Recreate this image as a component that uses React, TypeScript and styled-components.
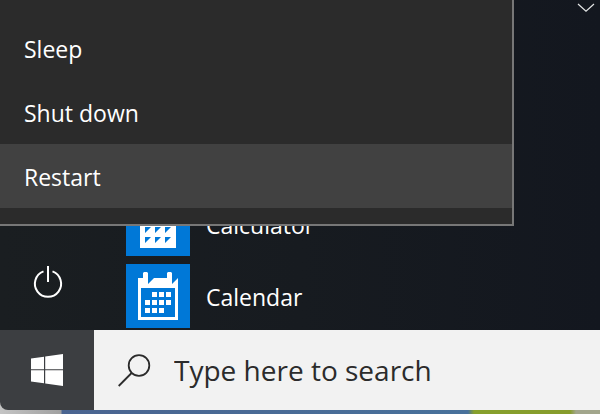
import React from "react";
import styled, { createGlobalStyle } from "styled-components";

const GlobalStyle = createGlobalStyle`
  *, *::before, *::after { box-sizing: border-box; }
  body { margin: 0; overflow: hidden; font-family: "Open Sans", "Noto Sans", sans-serif; }
  button, input { font: inherit; color: inherit; border: 0; margin: 0; padding: 0; background: none; }
  svg { display: block; flex: none; }
`;

const Desktop = styled.div`
  display: flex;
  flex-direction: column;
  min-height: 100vh;
  padding-bottom: 4px;
  background: linear-gradient(
    to right,
    #c4c4c4 0,
    #a0a0a0 61px,
    #4a6490 62px,
    #48719b 78%,
    #86a02c 79%,
    #869c2c 95%,
    #a2a68c 96%
  );
`;

const StartMenu = styled.main`
  position: relative;
  flex: 1;
  display: flex;
  overflow: hidden;
  background: linear-gradient(to right, #1a1e21, #171b20 50%, #13171f);
`;

const Rail = styled.nav`
  display: flex;
  flex-direction: column;
  justify-content: flex-end;
  width: 96px;
  padding-bottom: 16px;
`;

const RailButton = styled.button`
  display: flex;
  align-items: center;
  justify-content: center;
  height: 64px;
  color: #fff;
`;

const AppList = styled.div`
  flex: 1;
  display: flex;
  flex-direction: column;
  justify-content: flex-end;
  gap: 8px;
  padding: 0 30px 2px;
`;

const AppItem = styled.button`
  display: flex;
  align-items: center;
  gap: 16px;
  height: 64px;
  color: #fff;
  font-size: 23px;
  line-height: 32px;
  text-align: left;
`;

const AppName = styled.span`
  padding-top: 2px;
`;

const CollapseButton = styled.button`
  display: flex;
  align-self: flex-start;
  padding: 3px 5px 6px;
  position: absolute;
  top: 0;
  right: 0;
`;

const PowerMenu = styled.div`
  position: absolute;
  top: 0;
  left: 0;
  display: flex;
  flex-direction: column;
  width: 514px;
  max-width: 100%;
  padding: 16px 0;
  background: #2b2b2b;
  border: solid #777;
  border-width: 0 2px 2px 0;
`;

const PowerItem = styled.button<{ $active?: boolean }>`
  height: 64px;
  padding: 2px 24px 0;
  color: #fff;
  background: ${(p) => (p.$active ? "#414141" : "transparent")};
  font-size: 23px;
  line-height: 32px;
  text-align: left;
`;

const Taskbar = styled.footer`
  display: flex;
  height: 80px;
  overflow: hidden;
  background: #3c3e41;
  border-bottom-left-radius: 8px;
`;

const StartButton = styled.button`
  display: flex;
  align-items: center;
  justify-content: center;
  width: 94px;
`;

const SearchBox = styled.label`
  flex: 1;
  display: flex;
  align-items: center;
  gap: 22px;
  padding: 0 24px;
  background: #f2f2f2;
  color: #2b2b2b;
`;

const SearchInput = styled.input`
  flex: 1;
  min-width: 0;
  height: 40px;
  font-size: 28px;
  line-height: 40px;
  outline: none;
  &::placeholder {
    color: #2b2b2b;
    opacity: 1;
  }
`;

const PowerIcon = () => (
  <svg width="32" height="34" viewBox="0 0 32 34" fill="none" stroke="#fff" strokeWidth="2" aria-hidden="true">
    <path d="M11.5 6.4A13.1 13.1 0 1 0 20.5 6.4M16 1V17" />
  </svg>
);

const ChevronIcon = () => (
  <svg width="18" height="10" viewBox="0 0 18 10" fill="none" stroke="#e4e6e6" strokeWidth="1.2" aria-hidden="true">
    <path d="M1 1L9 8.3L17 1" />
  </svg>
);

const CalculatorIcon = () => (
  <svg width="64" height="64" viewBox="0 0 64 64" aria-hidden="true">
    <path fill="#0078d7" d="M0 0H64V64H0Z" />
    <path fill="#fff" d="M14 8H50V56H14Z" />
    <path
      fill="#0078d7"
      d="M19 13H45V24H19ZM19 35H25L19 41ZM29 35H35L29 41ZM39 35H45L39 41ZM19 45H25L19 51ZM29 45H35L29 51ZM39 45H45L39 51Z"
    />
  </svg>
);

const CalendarIcon = () => (
  <svg width="64" height="64" viewBox="0 0 64 64" aria-hidden="true">
    <path fill="#0078d7" d="M0 0H64V64H0Z" />
    <path
      fill="#fff"
      fillRule="evenodd"
      d="M12 14H17V9L18 8H21L22 9V20L28 14H41V9L42 8H45L46 9V20L52 14V56H12ZM15 24V53H49V24Z"
    />
    <path
      fill="#fff"
      d="M26 28h5v5h-5zM33 28h5v5h-5zM40 28h5v5h-5zM19 36h5v5h-5zM26 36h5v5h-5zM33 36h5v5h-5zM40 36h5v5h-5zM19 44h5v5h-5zM26 44h5v5h-5zM33 44h5v5h-5z"
    />
  </svg>
);

const WindowsIcon = () => (
  <svg width="32" height="32" viewBox="0 0 32 32" fill="#fff" aria-hidden="true">
    <path d="M0 4.5L13 2.7V15.2H0ZM14.2 2.5L32 0V15.2H14.2ZM0 16.3H13V29.3L0 27.5ZM14.2 16.3H32V32L14.2 29.5Z" />
  </svg>
);

const SearchIcon = () => (
  <svg width="34" height="34" viewBox="0 0 34 34" fill="none" stroke="#2b2b2b" strokeWidth="1.8" aria-hidden="true">
    <circle cx="21" cy="12.5" r="10.3" />
    <path d="M13.6 20L.7 33" />
  </svg>
);

const apps = [
  { name: "Calculator", Icon: CalculatorIcon },
  { name: "Calendar", Icon: CalendarIcon },
];

const powerActions = ["Sleep", "Shut down", "Restart"];

export default function App() {
  return (
    <Desktop>
      <GlobalStyle />
      <StartMenu>
        <Rail>
          <RailButton type="button" aria-label="Power">
            <PowerIcon />
          </RailButton>
        </Rail>
        <AppList>
          {apps.map(({ name, Icon }) => (
            <AppItem key={name} type="button">
              <Icon />
              <AppName>{name}</AppName>
            </AppItem>
          ))}
        </AppList>
        <CollapseButton type="button" aria-label="Collapse">
          <ChevronIcon />
        </CollapseButton>
        <PowerMenu role="menu" aria-label="Power">
          {powerActions.map((action) => (
            <PowerItem key={action} type="button" role="menuitem" $active={action === "Restart"}>
              {action}
            </PowerItem>
          ))}
        </PowerMenu>
      </StartMenu>
      <Taskbar>
        <StartButton type="button" aria-label="Start">
          <WindowsIcon />
        </StartButton>
        <SearchBox>
          <SearchIcon />
          <SearchInput type="text" placeholder="Type here to search" aria-label="Type here to search" />
        </SearchBox>
      </Taskbar>
    </Desktop>
  );
}
